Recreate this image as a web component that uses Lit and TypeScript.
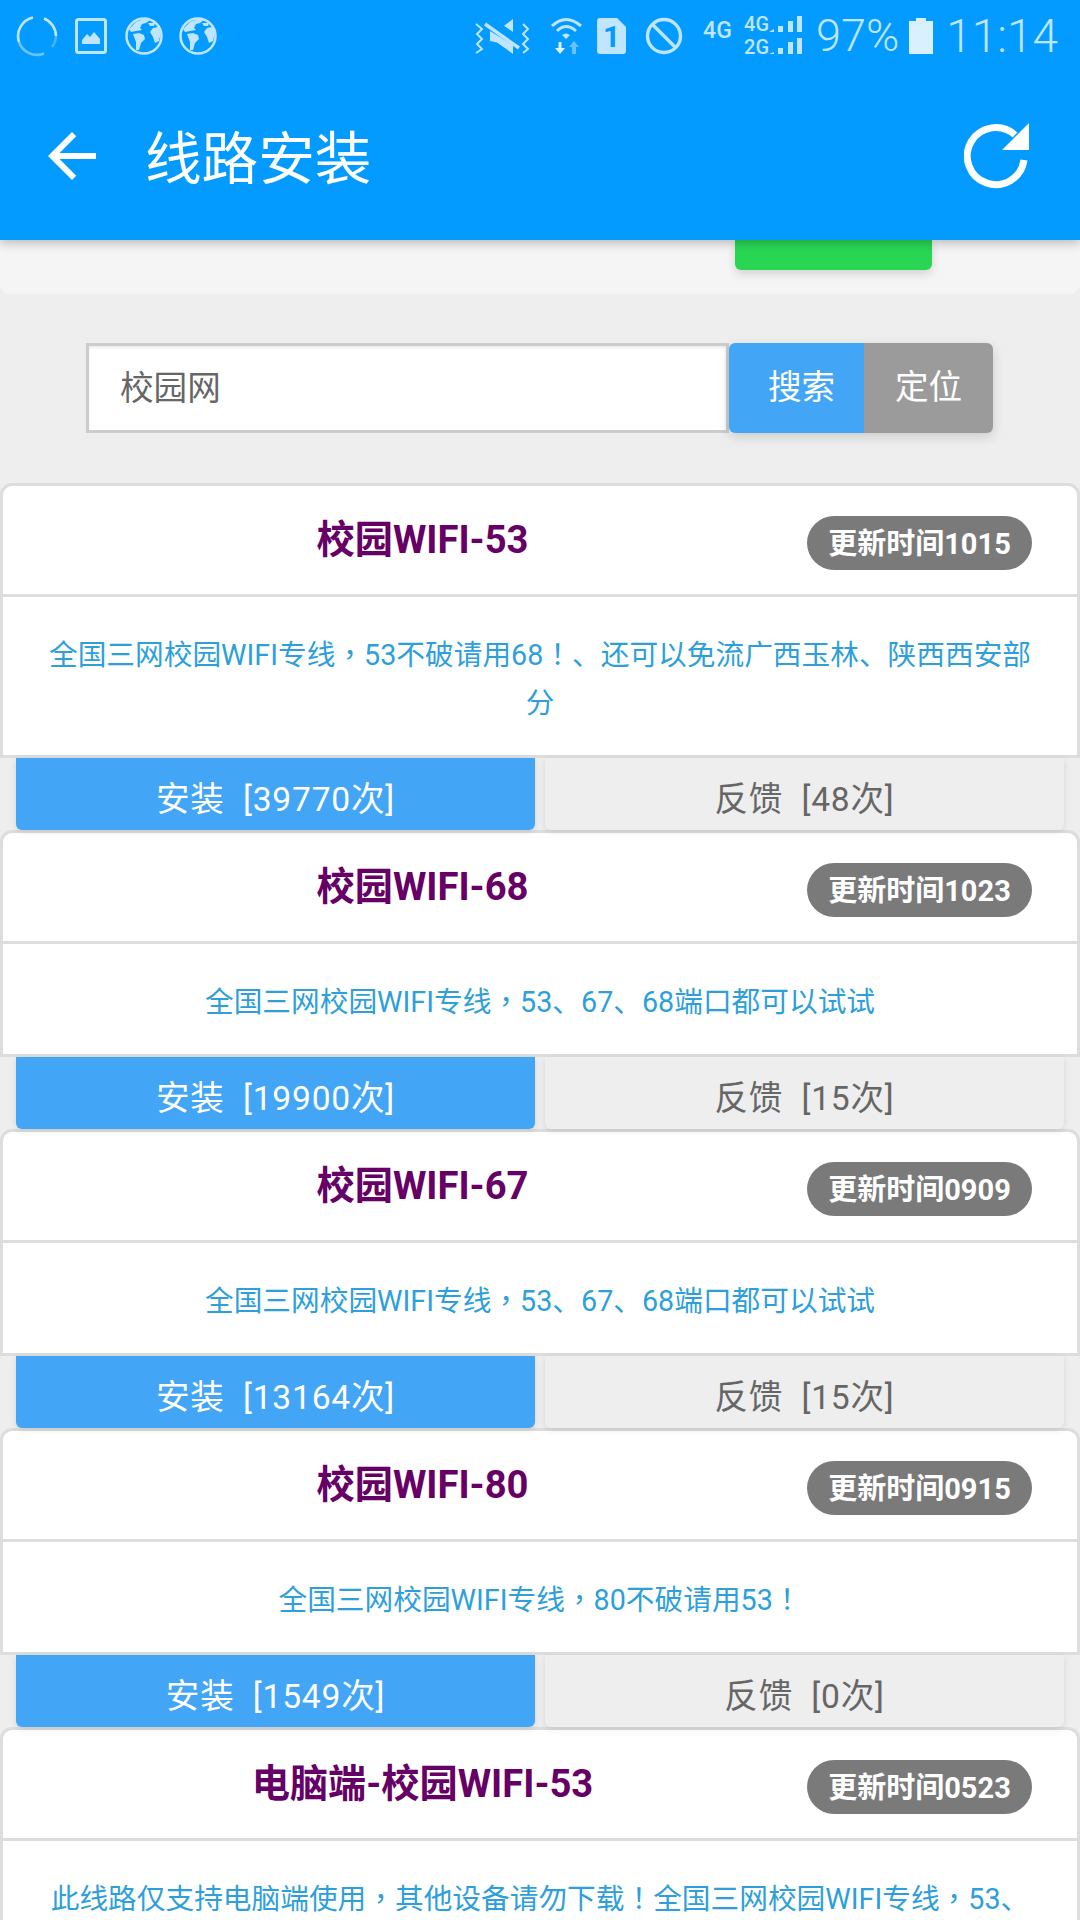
import { LitElement, html, css, svg } from 'lit';
import { customElement } from 'lit/decorators.js';

interface Line {
  title: string;
  updated: string;
  desc: string;
  installs?: string;
  feedback?: string;
}

const LINES: Line[] = [
  {
    title: '校园WIFI-53',
    updated: '1015',
    desc: '全国三网校园WIFI专线，53不破请用68！、还可以免流广西玉林、陕西西安部分',
    installs: '39770',
    feedback: '48',
  },
  {
    title: '校园WIFI-68',
    updated: '1023',
    desc: '全国三网校园WIFI专线，53、67、68端口都可以试试',
    installs: '19900',
    feedback: '15',
  },
  {
    title: '校园WIFI-67',
    updated: '0909',
    desc: '全国三网校园WIFI专线，53、67、68端口都可以试试',
    installs: '13164',
    feedback: '15',
  },
  {
    title: '校园WIFI-80',
    updated: '0915',
    desc: '全国三网校园WIFI专线，80不破请用53！',
    installs: '1549',
    feedback: '0',
  },
  {
    // last card runs off the bottom of the screen
    title: '电脑端-校园WIFI-53',
    updated: '0523',
    desc: '此线路仅支持电脑端使用，其他设备请勿下载！全国三网校园WIFI专线，53、',
  },
];

const globe = svg`
  <svg class="globe" viewBox="0 0 38 38">
    <circle cx="19" cy="19" r="17.5" fill="none" stroke="#bfe5ff" stroke-width="2.5" />
    <path fill="#bfe5ff" d="M4 12 L11 5 L19 2 L25 3 L21 6 L17 7 L15 11 L17 13 L11 14 L6 15 Z" />
    <path fill="#bfe5ff" d="M8 17 L14 16 L19 18 L20 22 L16 26 L14 33 L11 33 L11 25 Z" />
    <path fill="#bfe5ff" d="M25 15 L28 11 L33 10 L36 15 L34 24 L30 26 L28 20 Z" />
    <path fill="#bfe5ff" d="M23 6 L30 6 L29 9 L25 9 Z" />
  </svg>
`;

// ， and ！ sit centred in the reference, which is how the TC font draws them
const withPunct = (text: string) =>
  text.split(/([，！])/).map((part) => (part === '，' || part === '！' ? html`<span class="punct">${part}</span>` : part));

@customElement('app-root')
export class AppRoot extends LitElement {
  static styles = css`
    :host {
      display: block;
      width: 1080px;
      height: 1920px;
      overflow: hidden;
      background: #eeeeee;
      font-family: Roboto, 'Noto Sans CJK SC', sans-serif;
    }
    .appbar {
      position: relative;
      z-index: 2;
      height: 240px;
      background: #039bff;
      box-shadow: 0 3px 10px rgba(0, 0, 0, 0.25);
    }
    .status {
      display: flex;
      align-items: center;
      height: 72px;
      color: #bfe5ff;
    }
    .status svg {
      display: block;
      flex: none;
    }
    .spinner {
      width: 42px;
      height: 42px;
      margin-left: 16px;
    }
    .pic {
      width: 32px;
      height: 36px;
      margin-left: 17px;
    }
    .globe {
      width: 38px;
      height: 38px;
      margin-left: 18px;
    }
    .globe + .globe {
      margin-left: 16px;
    }
    .right {
      display: flex;
      align-items: center;
      margin-left: auto;
      padding-right: 22px;
    }
    .mute {
      width: 56px;
      height: 38px;
    }
    .wifi {
      width: 34px;
      height: 40px;
      margin-left: 19px;
    }
    .sim {
      width: 29px;
      height: 36px;
      margin-left: 13px;
      background: #bfe5ff;
      border-radius: 3px;
      clip-path: polygon(0 0, 20px 0, 100% 9px, 100% 100%, 0 100%);
      color: #039bff;
      font-size: 30px;
      font-weight: 700;
      line-height: 38px;
      text-align: center;
    }
    .block {
      width: 38px;
      height: 38px;
      margin-left: 19px;
    }
    .net {
      width: 29px;
      margin-left: 20px;
      margin-bottom: 10px;
      font-size: 23px;
      font-weight: 500;
      line-height: 28px;
    }
    .dual {
      display: flex;
      align-items: center;
      gap: 1px;
      width: 58px;
      margin-left: 12px;
    }
    .rates {
      display: flex;
      flex-direction: column;
      width: 24px;
      font-size: 20px;
      font-weight: 500;
      line-height: 23px;
    }
    .bars {
      width: 33px;
      height: 40px;
    }
    .level {
      margin-left: 14px;
      font-size: 45px;
      font-weight: 300;
      line-height: 52px;
    }
    .battery {
      width: 24px;
      height: 36px;
      margin-left: 10px;
    }
    .clock {
      margin-left: 13px;
      font-size: 46px;
      font-weight: 300;
      line-height: 52px;
    }
    .toolbar {
      display: flex;
      align-items: center;
      height: 168px;
    }
    .back {
      display: block;
      width: 72px;
      height: 72px;
      margin-left: 36px;
    }
    .heading {
      margin: 0 0 4px 37px;
      color: #fff;
      font-size: 56.6px;
    }
    .reload {
      display: block;
      width: 66px;
      height: 66px;
      margin-left: auto;
      margin-right: 50px;
    }
    .panel {
      height: 54px;
      padding-left: 735px;
      background: #f5f5f5;
      border-radius: 0 0 10px 10px;
    }
    .green {
      width: 197px;
      height: 30px;
      background: #29d654;
      border-radius: 0 0 6px 6px;
      box-shadow: 0 4px 10px rgba(0, 0, 0, 0.14);
    }
    .search {
      display: flex;
      height: 90px;
      margin: 49px 0 50px 86px;
    }
    .input {
      box-sizing: border-box;
      width: 643px;
      padding-left: 31px;
      background: #fff;
      border: 3px solid #cccccc;
      box-shadow: inset 0 2px 3px rgba(0, 0, 0, 0.08);
      color: #666;
      font-size: 33.6px;
      line-height: 86px;
    }
    .tools {
      display: flex;
      border-radius: 6px;
      box-shadow: 0 4px 12px rgba(0, 0, 0, 0.14);
      color: #fff;
      font-size: 33.6px;
      line-height: 90px;
      text-align: center;
    }
    .find {
      box-sizing: border-box;
      width: 135px;
      padding-left: 10px;
      background: #42a5f5;
      border-radius: 6px 0 0 6px;
    }
    .locate {
      width: 129px;
      background: #9b9b9b;
      border-radius: 0 6px 6px 0;
    }
    .card {
      background: #fff;
      border: 3px solid #dddddd;
      border-radius: 12px 12px 0 0;
    }
    .head {
      position: relative;
      height: 108px;
      border-bottom: 3px solid #dddddd;
    }
    .title {
      width: 839px;
      color: #660066;
      font-size: 38.2px;
      font-weight: 700;
      line-height: 108px;
      text-align: center;
    }
    .pill {
      position: absolute;
      top: 30px;
      right: 45px;
      box-sizing: border-box;
      width: 225px;
      height: 54px;
      background: #7a7a7a;
      border-radius: 27px;
      color: #fff;
      font-size: 29px;
      font-weight: 700;
      line-height: 56px;
      text-align: center;
    }
    .desc {
      padding: 34px 40px 28px;
      color: #2e9fdb;
      font-size: 28.7px;
      line-height: 48px;
      text-align: center;
    }
    .punct {
      font-family: 'Noto Sans CJK TC', sans-serif;
      line-height: 0;
    }
    .actions {
      display: flex;
      gap: 10px;
      height: 72px;
      padding: 0 16px;
    }
    .action {
      flex: 1;
      border-radius: 0 0 6px 6px;
      box-shadow: 0 2px 6px rgba(0, 0, 0, 0.1);
      font-size: 33.6px;
      letter-spacing: 0.8px;
      line-height: 84px;
      text-align: center;
      white-space: pre;
      overflow: hidden;
    }
    .install {
      background: #42a5f5;
      color: #fff;
    }
    .report {
      background: #eeeeee;
      color: #666;
    }
  `;

  renderStatus() {
    return html`
      <div class="status">
        <svg class="spinner" viewBox="0 0 42 42" fill="none" stroke="#bfe5ff" stroke-width="2.6">
          <path d="M17 2.6 A19 19 0 0 0 3 27" />
          <path d="M3 27 A19 19 0 0 0 28 38.5" opacity="0.55" />
          <path d="M28 3.5 A19 19 0 0 1 40 21" />
          <path d="M40 21 A19 19 0 0 1 36 32" opacity="0.35" />
        </svg>
        <svg class="pic" viewBox="0 0 32 36">
          <rect x="1.5" y="1.5" width="29" height="33" rx="2" fill="none" stroke="#bfe5ff" stroke-width="3" />
          <path fill="#bfe5ff" d="M7 26 V22 L12 16 L15 19 L19 14 L25 21 V26 Z" />
        </svg>
        ${globe}${globe}
        <div class="right">
          <svg class="mute" viewBox="0 0 56 38" fill="none" stroke="#bfe5ff">
            <path stroke-width="2" d="M1 7 L7 12 L2 17 L7 22 L2 27 L7 32 L1 36" />
            <path stroke-width="2" d="M48 7 L53 12 L48 17 L53 22 L48 27 L53 32 L48 36" />
            <path fill="#bfe5ff" stroke="none" d="M38 2 V15 L29 8.7 Z" />
            <path fill="#bfe5ff" stroke="none" d="M15 14 V24 L22 25.5 L38 37 V28 Z" />
            <path stroke-width="3.4" d="M10 7 L44 31" />
          </svg>
          <svg class="wifi" viewBox="0 0 34 40">
            <g fill="none" stroke="#bfe5ff" stroke-width="3">
              <path d="M2 10 Q16 -3 31 10" />
              <path d="M7 15 Q16 6 26 15" />
            </g>
            <path fill="#bfe5ff" d="M12 19 Q16 16 20 19 L16 23 Z" />
            <path fill="#dff2ff" d="M8.5 26 H11.5 V32 H15 L10 38 L5 32 H8.5 Z" />
            <path fill="#6bc1ff" d="M24 25 L29 31 H26 V38 H22 V31 H19 Z" />
          </svg>
          <div class="sim">1</div>
          <svg class="block" viewBox="0 0 38 38" fill="none" stroke="#bfe5ff" stroke-width="3.4">
            <circle cx="19" cy="19" r="16.5" />
            <path d="M7.5 7.5 L30.5 30.5" />
          </svg>
          <span class="net">4G</span>
          <div class="dual">
            <div class="rates"><span>4G</span><span>2G</span></div>
            <svg class="bars" viewBox="0 0 33 40" fill="#bfe5ff">
              <path d="M0 16 L5 13 V16 Z M9 16 V10 H14 V16 Z M19 16 V5 H24 V16 Z M28 16 V0 H33 V16 Z" />
              <path d="M0 38 L5 36 V38 Z M9 38 V32 H14 V38 Z M19 38 V26 H24 V38 Z M28 38 V22 H33 V38 Z" />
            </svg>
          </div>
          <span class="level">97%</span>
          <svg class="battery" viewBox="0 0 24 36">
            <path fill="#d9f0ff" d="M7 0 H17 V3 H24 V36 H0 V3 H7 Z" />
          </svg>
          <span class="clock">11:14</span>
        </div>
      </div>
    `;
  }

  renderToolbar() {
    return html`
      <div class="toolbar">
        <svg class="back" viewBox="0 0 24 24">
          <path fill="#fff" d="M20 11H7.83l5.59-5.59L12 4l-8 8 8 8 1.41-1.41L7.83 13H20v-2z" />
        </svg>
        <span class="heading">线路安装</span>
        <svg class="reload" viewBox="0 0 66 66">
          <path fill="none" stroke="#fff" stroke-width="7" d="M60 37 A28.5 28.5 0 1 1 51 12" />
          <path fill="#fff" d="M65 0 V27 H38 Z" />
        </svg>
      </div>
    `;
  }

  renderCard(line: Line) {
    return html`
      <div class="card">
        <div class="head">
          <div class="title">${line.title}</div>
          <div class="pill">更新时间${line.updated}</div>
        </div>
        <div class="desc">${withPunct(line.desc)}</div>
      </div>
      ${line.installs
        ? html`<div class="actions">
            <div class="action install">安装  [${line.installs}次]</div>
            <div class="action report">反馈  [${line.feedback}次]</div>
          </div>`
        : ''}
    `;
  }

  render() {
    return html`
      <div class="appbar">${this.renderStatus()} ${this.renderToolbar()}</div>
      <div class="panel"><div class="green"></div></div>
      <div class="search">
        <div class="input">校园网</div>
        <div class="tools">
          <div class="find">搜索</div>
          <div class="locate">定位</div>
        </div>
      </div>
      ${LINES.map((line) => this.renderCard(line))}
    `;
  }
}
